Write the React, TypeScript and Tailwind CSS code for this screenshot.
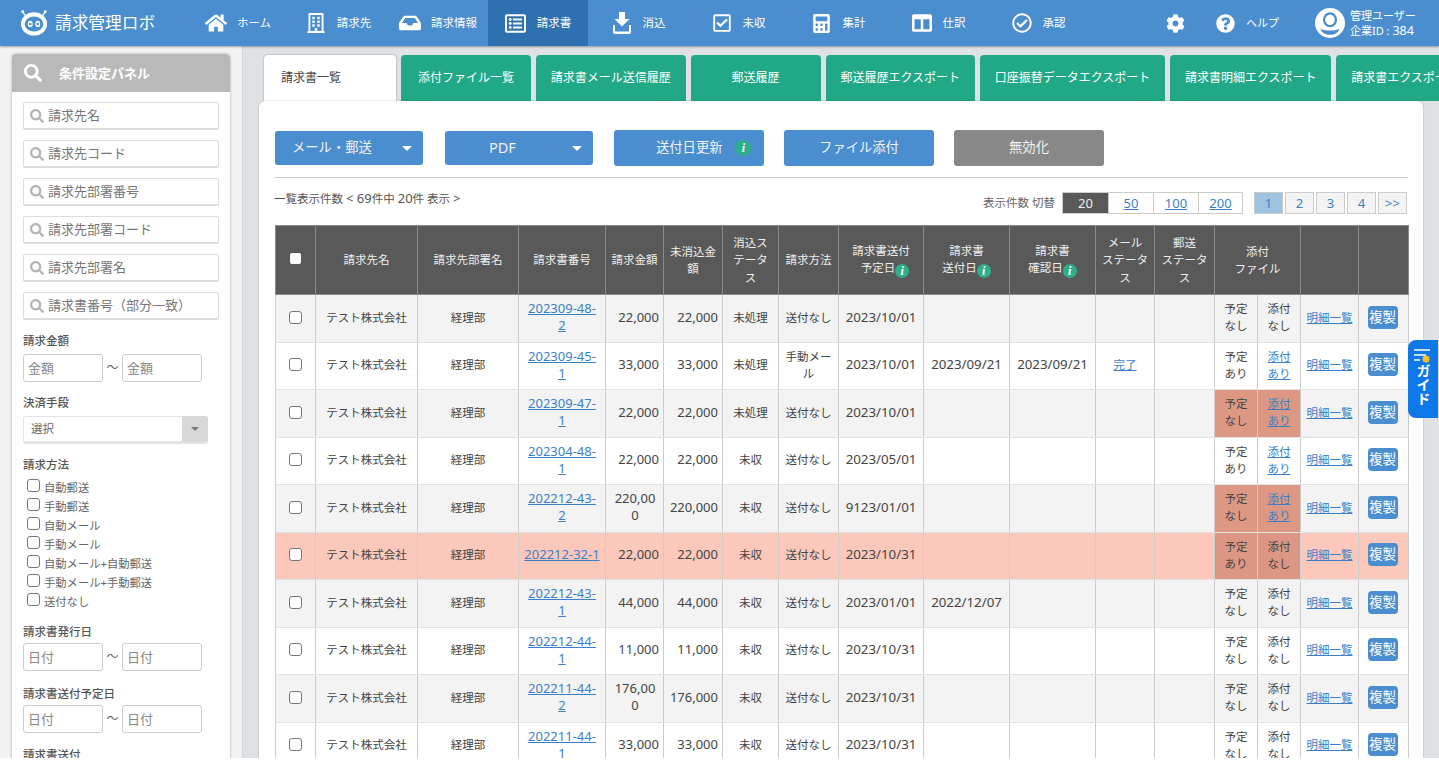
import type { ReactNode } from 'react'
import {
  FaHome,
  FaRegBuilding,
  FaInbox,
  FaRegListAlt,
  FaRegCheckSquare,
  FaCalculator,
  FaColumns,
  FaRegCheckCircle,
  FaCog,
  FaQuestionCircle,
  FaSearch,
} from 'react-icons/fa'

function RobotLogo() {
  return (
    <svg width="28" height="28" viewBox="0 0 30 30" className="shrink-0">
      <path d="M7 9 3 3M23 9l4-6" stroke="#fff" strokeWidth="1.3" />
      <circle cx="3" cy="3" r="1.6" fill="#fff" />
      <circle cx="27" cy="3" r="1.6" fill="#fff" />
      <ellipse cx="15" cy="16" rx="14" ry="12.5" fill="#fff" />
      <ellipse cx="15" cy="16" rx="10" ry="8" fill="#4a8ecf" />
      <ellipse cx="11" cy="16" rx="2.6" ry="3.4" fill="#fff" />
      <ellipse cx="19" cy="16" rx="2.6" ry="3.4" fill="#fff" />
      <circle cx="11" cy="16" r="1.3" fill="#4a8ecf" />
      <circle cx="19" cy="16" r="1.3" fill="#4a8ecf" />
    </svg>
  )
}

function ClearIcon() {
  return (
    <svg width="18" height="22" viewBox="0 0 18 22" fill="#fff">
      <path d="M6 0h6v7h4.500L9 14.500 1.500 7H6z" />
      <path d="M0 13h2v6.500h14V13h2v6.500a2.500 2.500 0 0 1-2.500 2.500h-13A2.500 2.500 0 0 1 0 19.500z" />
    </svg>
  )
}

function UserIcon() {
  return (
    <svg width="30" height="30" viewBox="0 0 33 33">
      <circle cx="16.500" cy="16.500" r="16.500" fill="#fff" />
      <ellipse cx="16.500" cy="13" rx="6.500" ry="7" fill="none" stroke="#4a8ecf" strokeWidth="2.500" />
      <path d="M6 22.500c3 3 18 3 21 0-1 4.500-5.500 7-10.500 7S7 27 6 22.500z" fill="#4a8ecf" />
    </svg>
  )
}

function GuideIcon() {
  return (
    <svg width="18" height="15" viewBox="0 0 18 15">
      <path d="M0 1h16M0 6h12M0 11h6" stroke="#fff" strokeWidth="1.500" />
      <circle cx="12" cy="10" r="3.500" fill="#fbbf24" />
    </svg>
  )
}

function InfoDot({ size = 'small' }: { size?: 'small' | 'big' }) {
  return (
    <span
      className={`inline-flex items-center justify-center rounded-full bg-[#2fae8c] text-white font-bold italic font-['Liberation_Serif',serif] leading-none align-[-3px] ${
        size === 'big' ? 'h-4 w-4 text-[12px]' : 'h-[14px] w-[14px] text-[12px]'
      }`}
    >
      i
    </span>
  )
}

const navItems = [
  { label: 'ホーム', icon: <FaHome size={22} /> },
  { label: '請求先', icon: <FaRegBuilding size={20} /> },
  { label: '請求情報', icon: <FaInbox size={22} /> },
  { label: '請求書', icon: <FaRegListAlt size={21} />, active: true },
  { label: '消込', icon: <ClearIcon /> },
  { label: '未収', icon: <FaRegCheckSquare size={20} /> },
  { label: '集計', icon: <FaCalculator size={19} /> },
  { label: '仕訳', icon: <FaColumns size={20} /> },
  { label: '承認', icon: <FaRegCheckCircle size={20} /> },
]

const tabs = [
  '添付ファイル一覧',
  '請求書メール送信履歴',
  '郵送履歴',
  '郵送履歴エクスポート',
  '口座振替データエクスポート',
  '請求書明細エクスポート',
  '請求書エクスポート',
]

const searchFields = ['請求先名', '請求先コード', '請求先部署番号', '請求先部署コード', '請求先部署名', '請求書番号（部分一致）']
const methods = ['自動郵送', '手動郵送', '自動メール', '手動メール', '自動メール+自動郵送', '手動メール+手動郵送', '送付なし']
const colWidths = [40, 102, 101, 87, 58, 59, 56, 60, 85, 86, 86, 59, 60, 43, 43, 58, 50]

type Row = {
  no: string[]
  amount: string[]
  rest: string
  status: string
  method: string[]
  due: string
  sent?: string
  confirmed?: string
  mail?: string
  plan: string
  file: string
  flag?: boolean
  tone: 'gray' | 'white' | 'pink'
}

const rows: Row[] = [
  { no: ['202309-48-', '2'], amount: ['22,000'], rest: '22,000', status: '未処理', method: ['送付なし'], due: '2023/10/01', plan: 'なし', file: 'なし', tone: 'gray' },
  { no: ['202309-45-', '1'], amount: ['33,000'], rest: '33,000', status: '未処理', method: ['手動メー', 'ル'], due: '2023/10/01', sent: '2023/09/21', confirmed: '2023/09/21', mail: '完了', plan: 'あり', file: 'あり', tone: 'white' },
  { no: ['202309-47-', '1'], amount: ['22,000'], rest: '22,000', status: '未処理', method: ['送付なし'], due: '2023/10/01', plan: 'なし', file: 'あり', flag: true, tone: 'gray' },
  { no: ['202304-48-', '1'], amount: ['22,000'], rest: '22,000', status: '未収', method: ['送付なし'], due: '2023/05/01', plan: 'あり', file: 'あり', tone: 'white' },
  { no: ['202212-43-', '2'], amount: ['220,00', '0'], rest: '220,000', status: '未収', method: ['送付なし'], due: '9123/01/01', plan: 'なし', file: 'あり', flag: true, tone: 'gray' },
  { no: ['202212-32-1'], amount: ['22,000'], rest: '22,000', status: '未収', method: ['送付なし'], due: '2023/10/31', plan: 'あり', file: 'なし', flag: true, tone: 'pink' },
  { no: ['202212-43-', '1'], amount: ['44,000'], rest: '44,000', status: '未収', method: ['送付なし'], due: '2023/01/01', sent: '2022/12/07', plan: 'なし', file: 'なし', tone: 'gray' },
  { no: ['202212-44-', '1'], amount: ['11,000'], rest: '11,000', status: '未収', method: ['送付なし'], due: '2023/10/31', plan: 'なし', file: 'なし', tone: 'white' },
  { no: ['202211-44-', '2'], amount: ['176,00', '0'], rest: '176,000', status: '未収', method: ['送付なし'], due: '2023/10/31', plan: 'なし', file: 'なし', tone: 'gray' },
  { no: ['202211-44-', '1'], amount: ['33,000'], rest: '33,000', status: '未収', method: ['送付なし'], due: '2023/10/31', plan: 'なし', file: 'なし', tone: 'white' },
]

const rowBg = { gray: 'bg-[#f3f3f3]', white: 'bg-white', pink: 'bg-[#fcc8bc]' }

function Caret() {
  return <span className="h-0 w-0 border-x-[5px] border-t-[5px] border-x-transparent border-t-white" />
}

function Th({ children, colSpan }: { children?: ReactNode; colSpan?: number }) {
  return (
    <th colSpan={colSpan} className="border border-[#8c8c8c] px-[5px] text-center align-middle text-[11.5px] font-normal leading-[17.5px] text-[#eee]">
      {children}
    </th>
  )
}

function Td({ children, className = '' }: { children?: ReactNode; className?: string }) {
  return <td className={`border border-[#ccc] border-b-[#e2e2e2] px-[5px] pb-[2px] text-center align-middle leading-[17px] ${className}`}>{children}</td>
}

function Num({ children }: { children: ReactNode }) {
  return <span className="text-[13px]">{children}</span>
}

function DateText({ children }: { children: ReactNode }) {
  return <span className="text-[13.3px]">{children}</span>
}

function RangeInput({ placeholder }: { placeholder: string }) {
  return (
    <div className="flex items-center">
      <input placeholder={placeholder} className="h-[28px] w-[80px] rounded-[3px] border border-[#ccc] bg-white px-1 text-[13px] placeholder:text-[#888]" />
      <span className="w-[19px] text-center text-[12px] text-[#666]">～</span>
      <input placeholder={placeholder} className="h-[28px] w-[80px] rounded-[3px] border border-[#ccc] bg-white px-1 text-[13px] placeholder:text-[#888]" />
    </div>
  )
}

function FieldLabel({ children }: { children: ReactNode }) {
  return <div className="text-[11.5px] font-medium leading-[16px] text-[#555]">{children}</div>
}

function Sidebar() {
  return (
    <aside className="w-[243px] shrink-0 border-r border-[#d5d5d5] bg-[#f2f2f2] pl-[12px] pt-[8px]">
      <div className="w-[218px] rounded-t-[4px] bg-white shadow-[0_0_3px_rgba(0,0,0,0.3)]">
        <div className="flex h-[38px] items-center rounded-t-[4px] bg-[#b9b9b9] pl-[12px] text-white">
          <FaSearch size={18} />
          <span className="ml-[17px] pt-[2px] text-[13px] font-bold">条件設定パネル</span>
        </div>
        <div className="px-[11px] pt-[10px]">
          <div className="flex flex-col gap-[10px]">
            {searchFields.map((name) => (
              <div key={name} className="flex h-[28px] items-center rounded-[2px] border border-[#ddd] border-b-2 bg-white pl-[6px] text-[13px] text-[#777]">
                <FaSearch size={14} className="mr-[4px] text-[#b5b5b5]" />
                {name}
              </div>
            ))}
          </div>
          <div className="mt-[13px]">
            <FieldLabel>請求金額</FieldLabel>
          </div>
          <div className="mt-[5px]">
            <RangeInput placeholder="金額" />
          </div>
          <div className="mt-[13px]">
            <FieldLabel>決済手段</FieldLabel>
          </div>
          <div className="mt-[5px] flex h-[28px] w-[185px] items-center justify-between overflow-hidden rounded-[3px] border-b-2 border-[#e5e5e5] bg-white shadow-[inset_0_0_0_1px_#e5e5e5]">
            <span className="pl-[8px] text-[11.5px] text-[#666]">選択</span>
            <span className="flex h-full w-[26px] items-center justify-center bg-[#d8d8d8]">
              <span className="h-0 w-0 border-x-[4px] border-t-[4px] border-x-transparent border-t-[#777]" />
            </span>
          </div>
          <div className="mt-[13px]">
            <FieldLabel>請求方法</FieldLabel>
          </div>
          <div className="mt-[5px] flex flex-col pl-[4px]">
            {methods.map((m) => (
              <label key={m} className="flex h-[19px] items-start text-[11.3px] leading-[19px] text-[#666]">
                <input type="checkbox" className="mr-[4px] mt-[1px] h-[13px] w-[13px] appearance-none rounded-[3px] border border-[#777] bg-white" />
                {m}
              </label>
            ))}
          </div>
          <div className="mt-[13px]">
            <FieldLabel>請求書発行日</FieldLabel>
          </div>
          <div className="mt-[3px]">
            <RangeInput placeholder="日付" />
          </div>
          <div className="mt-[15px]">
            <FieldLabel>請求書送付予定日</FieldLabel>
          </div>
          <div className="mt-[3px]">
            <RangeInput placeholder="日付" />
          </div>
          <div className="mt-[14px]">
            <FieldLabel>請求書送付</FieldLabel>
          </div>
        </div>
      </div>
    </aside>
  )
}

function InvoiceTable() {
  return (
    <table className="w-[1133px] table-fixed border-collapse text-[11.5px] text-[#444]">
      <colgroup>
        {colWidths.map((w, i) => (
          <col key={i} style={{ width: w }} />
        ))}
      </colgroup>
      <thead className="bg-[#595959]">
        <tr className="h-[69px]">
          <Th>
            <span className="mx-auto -mt-[3px] block h-[11px] w-[11px] rounded-[2px] bg-white" />
          </Th>
          <Th>請求先名</Th>
          <Th>請求先部署名</Th>
          <Th>請求書番号</Th>
          <Th>請求金額</Th>
          <Th>未消込金額</Th>
          <Th>消込ステータス</Th>
          <Th>請求方法</Th>
          <Th>
            請求書送付
            <br />
            <span className="pl-[8px]">予定日</span>
            <InfoDot />
          </Th>
          <Th>
            請求書
            <br />
            送付日
            <InfoDot />
          </Th>
          <Th>
            請求書
            <br />
            確認日
            <InfoDot />
          </Th>
          <Th>
            メール
            <br />
            ステータ
            <br />ス
          </Th>
          <Th>
            郵送
            <br />
            ステータ
            <br />ス
          </Th>
          <Th colSpan={2}>
            添付
            <br />
            ファイル
          </Th>
          <Th />
          <Th />
        </tr>
      </thead>
      <tbody>
        {rows.map((r, i) => {
          const flagBg = r.flag ? (r.tone === 'pink' ? 'bg-[#db9783]' : 'bg-[#dd9884]') : ''
          return (
            <tr key={i} className={`h-[47.5px] ${rowBg[r.tone]}`}>
              <Td>
                <input type="checkbox" className="mx-auto block h-[13px] w-[13px] appearance-none rounded-[3px] border border-[#777] bg-white" />
              </Td>
              <Td>テスト株式会社</Td>
              <Td>経理部</Td>
              <Td className="!px-0">
                <a className="text-[13px] text-[#3b7fc8] underline">
                  {r.no.map((part, k) => (
                    <span key={k} className="block">
                      {part}
                    </span>
                  ))}
                </a>
              </Td>
              <Td className="!pr-[4px] text-right">
                {r.amount.length > 1 ? (
                  <span className="block text-center text-[13px]">
                    {r.amount[0]}
                    <br />
                    {r.amount[1]}
                  </span>
                ) : (
                  <Num>{r.amount[0]}</Num>
                )}
              </Td>
              <Td className="!pr-[4px] text-right">
                <Num>{r.rest}</Num>
              </Td>
              <Td>{r.status}</Td>
              <Td>
                {r.method.map((m) => (
                  <span key={m} className="block">
                    {m}
                  </span>
                ))}
              </Td>
              <Td className="!px-0">
                <DateText>{r.due}</DateText>
              </Td>
              <Td className="!px-0">
                <DateText>{r.sent}</DateText>
              </Td>
              <Td className="!px-0">
                <DateText>{r.confirmed}</DateText>
              </Td>
              <Td>{r.mail && <a className="text-[#3b7fc8] underline">{r.mail}</a>}</Td>
              <Td />
              <Td className={`!px-0 ${flagBg}`}>
                予定
                <br />
                {r.plan}
              </Td>
              <Td className={`!px-0 ${flagBg}`}>
                {r.file === 'あり' ? (
                  <a className="text-[#3b7fc8] underline">
                    添付
                    <br />
                    {r.file}
                  </a>
                ) : (
                  <>
                    添付
                    <br />
                    {r.file}
                  </>
                )}
              </Td>
              <Td className="!px-0">
                <a className="text-[#3b7fc8] underline">明細一覧</a>
              </Td>
              <Td className="!px-0">
                <button className="mr-[2px] h-[23px] w-[30px] rounded-[4px] bg-[#4a8ecf] text-[13.5px] leading-[23px] text-white">複製</button>
              </Td>
            </tr>
          )
        })}
      </tbody>
    </table>
  )
}

export default function App() {
  return (
    <div className="relative h-[758px] w-full overflow-hidden bg-[#dfe2e5] font-['Noto_Sans','Noto_Sans_CJK_JP',sans-serif] text-[#444]">
      {/* Header */}
      <header className="relative z-10 flex h-[46px] items-center bg-[#4a8ecf] text-white shadow-[0_1px_2px_rgba(0,0,0,0.35)]">
        <div className="flex w-[188px] shrink-0 items-center pl-[20px]">
          <RobotLogo />
          <span className="ml-[7px] whitespace-nowrap text-[16.7px] font-normal leading-none">請求管理ロボ</span>
        </div>
        {navItems.map((item) => (
          <div key={item.label} className={`flex h-full w-[100px] shrink-0 items-center justify-center gap-[10px] ${item.active ? 'bg-[#2e70b0]' : ''}`}>
            <span className="flex w-[22px] justify-center">{item.icon}</span>
            <span className="whitespace-nowrap text-[11.5px]">{item.label}</span>
          </div>
        ))}
        <div className="ml-[76px] flex w-[22px] justify-center">
          <FaCog size={19} />
        </div>
        <div className="ml-[28px] flex w-[22px] justify-center">
          <FaQuestionCircle size={19} />
        </div>
        <span className="ml-[10px] text-[11px]">ヘルプ</span>
        <div className="ml-[36px]">
          <UserIcon />
        </div>
        <div className="ml-[5px] text-[11px] leading-[15px]">
          <div>管理ユーザー</div>
          <div>
            企業ID : <span className="text-[12.5px]">384</span>
          </div>
        </div>
      </header>

      <div className="flex h-[712px]">
        <Sidebar />

        {/* Main */}
        <main className="min-w-0 flex-1 pl-[16px]">
          <div className="flex gap-[5px] overflow-hidden pl-[5px] pt-[9px]">
            <div className="flex h-[46px] w-[132px] shrink-0 items-center rounded-t-[4px] bg-white pl-[17px] text-[12px] text-[#444] shadow-[0_0_2px_rgba(0,0,0,0.4)]">請求書一覧</div>
            {tabs.map((t) => (
              <div key={t} className="flex h-[46px] min-w-[130px] shrink-0 items-center justify-center whitespace-nowrap rounded-t-[4px] bg-[#21a886] px-[14.8px] text-[12px] text-white">
                {t}
              </div>
            ))}
          </div>
          <section className="relative h-[700px] w-[1164px] rounded-t-[6px] bg-white pl-[16px] pr-[15px] pt-[29px] shadow-[0_0_2px_rgba(0,0,0,0.25)]">
            <div className="flex h-[36px] items-center border-0 text-[13.3px] text-[#f2f2f2]">
              <button className="relative mr-[22px] flex h-[34px] w-[148px] items-center justify-between rounded-[3px] bg-[#4a8ecf] pl-[17px] pr-[11px]">
                メール・郵送
                <Caret />
              </button>
              <button className="relative mr-[21px] flex h-[34px] w-[148px] items-center justify-between rounded-[3px] bg-[#4a8ecf] pl-[44px] pr-[11px] text-[14.5px]">
                PDF
                <Caret />
              </button>
              <button className="mr-[20px] flex h-[36px] w-[150px] items-center gap-[13px] rounded-[3px] bg-[#4a8ecf] pl-[42px]">
                送付日更新
                <InfoDot size="big" />
              </button>
              <button className="mr-[20px] h-[36px] w-[150px] rounded-[3px] bg-[#4a8ecf]">ファイル添付</button>
              <button className="h-[36px] w-[150px] rounded-[3px] bg-[#888]">無効化</button>
            </div>
            <div className="mt-[11px] border-t border-[#ccc]" />
            <div className="mr-[1px] mt-[14px] flex h-[22px] items-start">
              <span className="-ml-px whitespace-nowrap text-[11.5px] leading-[12px] text-[#555]">
                一覧表示件数 <span className="text-[13px]">&lt; 69</span>件中 <span className="text-[13px]">20</span>件 表示 <span className="text-[13px]">&gt;</span>
              </span>
              <span className="ml-auto mr-[7px] mt-[3px] text-[11.5px] leading-[16px] text-[#666]">表示件数 切替</span>
              <div className="flex h-[22px] border border-[#ccc] text-[13px] leading-[20px]">
                <span className="w-[45px] bg-[#595959] text-center text-[#eee]">20</span>
                <a className="w-[45px] border-l border-[#ccc] text-center text-[#3b7fc8] underline">50</a>
                <a className="w-[45px] border-l border-[#ccc] text-center text-[#3b7fc8] underline">100</a>
                <a className="w-[44px] border-l border-[#ccc] text-center text-[#3b7fc8] underline">200</a>
              </div>
              <div className="ml-[11px] flex gap-[2px] text-[13px] leading-[20px]">
                <span className="h-[22px] w-[29px] border border-[#ccc] bg-[#9ec3e0] text-center text-[#3b7fc8]">1</span>
                {['2', '3', '4', '>>'].map((p) => (
                  <span key={p} className="h-[22px] w-[29px] border border-[#ccc] bg-[#f3f3f3] text-center text-[#3b7fc8]">
                    {p}
                  </span>
                ))}
              </div>
            </div>
            <div className="mt-[11px]">
              <InvoiceTable />
            </div>
          </section>
        </main>
      </div>

      {/* Guide */}
      <div className="absolute left-[1408px] top-[340px] z-20 flex h-[78px] w-[30px] flex-col items-center rounded-l-[8px] bg-[#0f78e8] pt-[9px] text-white">
        <GuideIcon />
        <span className="text-[14px] font-bold leading-[15px] [writing-mode:vertical-rl]">ガイド</span>
      </div>
    </div>
  )
}
